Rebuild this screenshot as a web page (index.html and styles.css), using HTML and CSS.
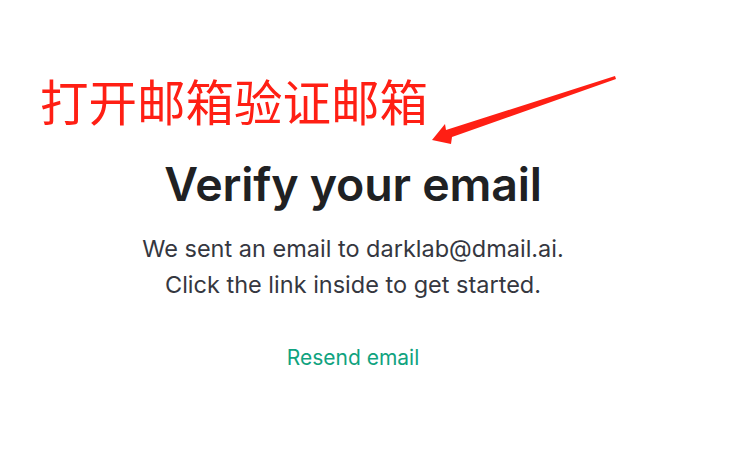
FILE: index.html
```html
<!DOCTYPE html>
<html lang="en">
<head>
<meta charset="utf-8">
<link rel="stylesheet" href="styles.css">
</head>
<body>
<div class="page">
  <div class="note">打开邮箱验证邮箱</div>
  <main class="card">
    <h1 class="title">Verify your email</h1>
    <p class="text">We sent an email to darklab@dmail.ai.<br>Click the link inside to get started.</p>
    <a class="resend" href="#">Resend email</a>
  </main>
  <svg class="arrow" width="737" height="473" viewBox="0 0 737 473">
    <polygon points="432,140 445,124 446,130 615,76 616,79 452,137 451,144" fill="#ff1f14"/>
  </svg>
</div>
</body>
</html>
```
FILE: styles.css
```css
html, body {
  margin: 0;
  padding: 0;
  background: #ffffff;
}
.page {
  position: relative;
  width: 737px;
  height: 473px;
  overflow: hidden;
}
.note {
  padding: 70px 0 0 40px;
  font-family: "Noto Sans CJK SC", sans-serif;
  font-size: 48.5px;
  line-height: 60px;
  color: #ff1f14;
}
.card {
  display: flex;
  flex-direction: column;
  align-items: center;
  padding-right: 31px;
  font-family: Inter, "Liberation Sans", sans-serif;
}
.title {
  margin: 26px 0 0;
  font-size: 46.5px;
  font-weight: 600;
  line-height: 56px;
  color: #202123;
  letter-spacing: -0.2px;
}
.text {
  margin: 19px 0 0;
  font-size: 23.5px;
  line-height: 36px;
  color: #353740;
  text-align: center;
}
.resend {
  margin-top: 42px;
  font-size: 21px;
  color: #10a37f;
  text-decoration: none;
}
.arrow {
  position: absolute;
  left: 0;
  top: 0;
  pointer-events: none;
}
```
